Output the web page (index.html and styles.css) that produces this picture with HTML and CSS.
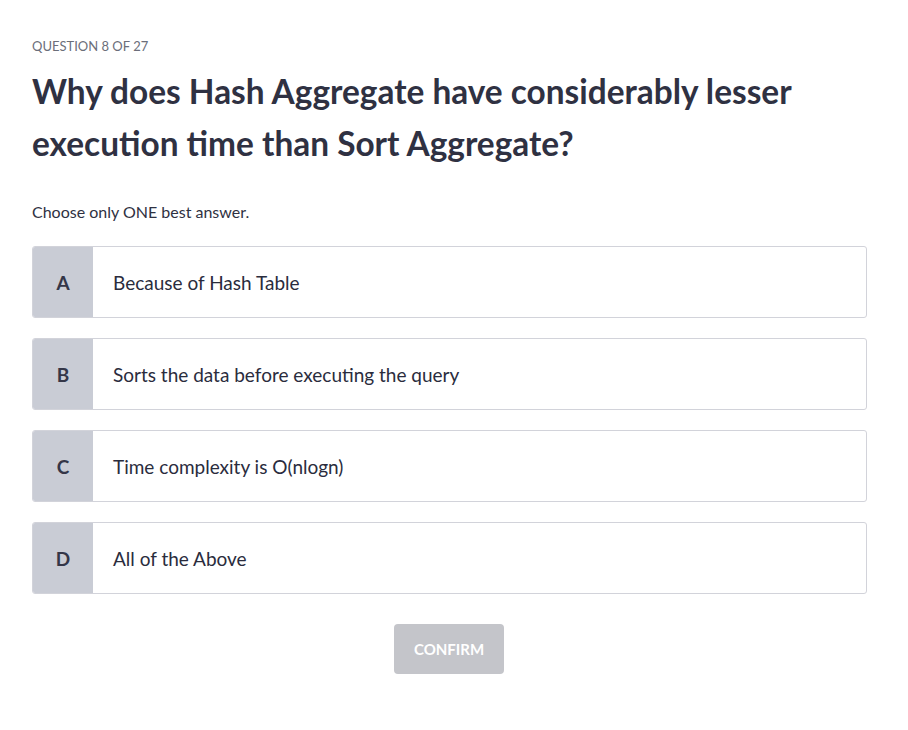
FILE: index.html
```html
<!DOCTYPE html>
<html>
<head>
<meta charset="utf-8">
<link rel="stylesheet" href="styles.css">
</head>
<body>
<main class="quiz">
  <div class="counter">QUESTION 8 OF 27</div>
  <h1 class="question">Why does Hash Aggregate have considerably lesser execution time than Sort Aggregate?</h1>
  <p class="hint">Choose only ONE best answer.</p>
  <div class="options">
    <div class="option"><div class="letter">A</div><div class="text">Because of Hash Table</div></div>
    <div class="option"><div class="letter">B</div><div class="text">Sorts the data before executing the query</div></div>
    <div class="option"><div class="letter">C</div><div class="text">Time complexity is O(nlogn)</div></div>
    <div class="option"><div class="letter">D</div><div class="text">All of the Above</div></div>
  </div>
  <div class="actions"><button class="confirm">CONFIRM</button></div>
</main>
</body>
</html>
```
FILE: styles.css
```css
html, body { margin: 0; padding: 0; background: #fff; }
body { font-family: Lato, "Noto Sans", sans-serif; color: #2f3142; }
.quiz { width: 835px; padding: 38px 0 0 32px; }
.counter { font-size: 13px; color: #6b6e7a; line-height: 16px; letter-spacing: 0px; }
.question { font-size: 33.4px; font-weight: 700; line-height: 52px; margin: 11px 0 0; color: #2f3142; }
.hint { font-size: 16px; margin: 33px 0 0; line-height: 20px; color: #2f3142; }
.options { display: flex; flex-direction: column; gap: 20px; margin-top: 24px; }
.option { display: flex; height: 70px; border: 1px solid #d2d3da; border-radius: 3px; overflow: hidden; align-items: stretch; }
.letter { width: 60px; background: #c9ccd5; display: flex; align-items: center; justify-content: center; font-weight: 700; font-size: 19px; color: #343648; }
.text { display: flex; align-items: center; padding-left: 20px; font-size: 19px; color: #2a2c3d; }
.actions { display: flex; justify-content: center; margin-top: 30px; padding-right: 1px; }
.confirm { width: 110px; height: 50px; border: none; border-radius: 4px; background: #c4c5ca; color: #fff; font-family: Lato, sans-serif; font-weight: 700; font-size: 15px; }
```
